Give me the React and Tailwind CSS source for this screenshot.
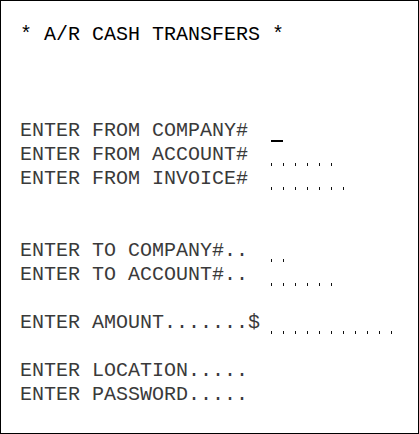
import React from 'react';

// one 12px character cell per position of a field
const Field = ({ cells, cursor }) => (
  <div className="flex h-[24px] items-end">
    {Array.from({ length: cells }).map((_, i) => (
      <div key={i} className="flex h-full w-[12px] items-end">
        {cursor && i === 0 ? (
          <div className="mb-[1px] h-[2px] w-[13px] bg-black" />
        ) : (
          <div className="mb-[1px] h-[3px] w-[1px] bg-[#111]" />
        )}
      </div>
    ))}
  </div>
);

const Row = ({ label, cells, cursor }) => (
  <div className="flex h-[24px] items-start">
    <span className="w-[251px] whitespace-pre leading-[24px]">{label}</span>
    {cells ? <Field cells={cells} cursor={cursor} /> : null}
  </div>
);

const Gap = ({ rows }) => <div style={{ height: rows * 24 }} />;

export default function App() {
  return (
    <div
      className="h-[434px] w-[419px] overflow-hidden border border-black bg-white pl-[19px] pt-[22px] text-[20px] text-[#3a3a3a]"
      style={{ fontFamily: '"Liberation Mono", "DejaVu Sans Mono", monospace' }}
    >
      <div className="h-[24px] whitespace-pre leading-[24px] text-black">* A/R CASH TRANSFERS *</div>
      <Gap rows={3} />
      <Row label="ENTER FROM COMPANY#" cells={1} cursor />
      <Row label="ENTER FROM ACCOUNT#" cells={6} />
      <Row label="ENTER FROM INVOICE#" cells={7} />
      <Gap rows={2} />
      <Row label="ENTER TO COMPANY#.." cells={2} />
      <Row label="ENTER TO ACCOUNT#.." cells={6} />
      <Gap rows={1} />
      <Row label="ENTER AMOUNT.......$" cells={11} />
      <Gap rows={1} />
      <Row label="ENTER LOCATION....." />
      <Row label="ENTER PASSWORD....." />
    </div>
  );
}
